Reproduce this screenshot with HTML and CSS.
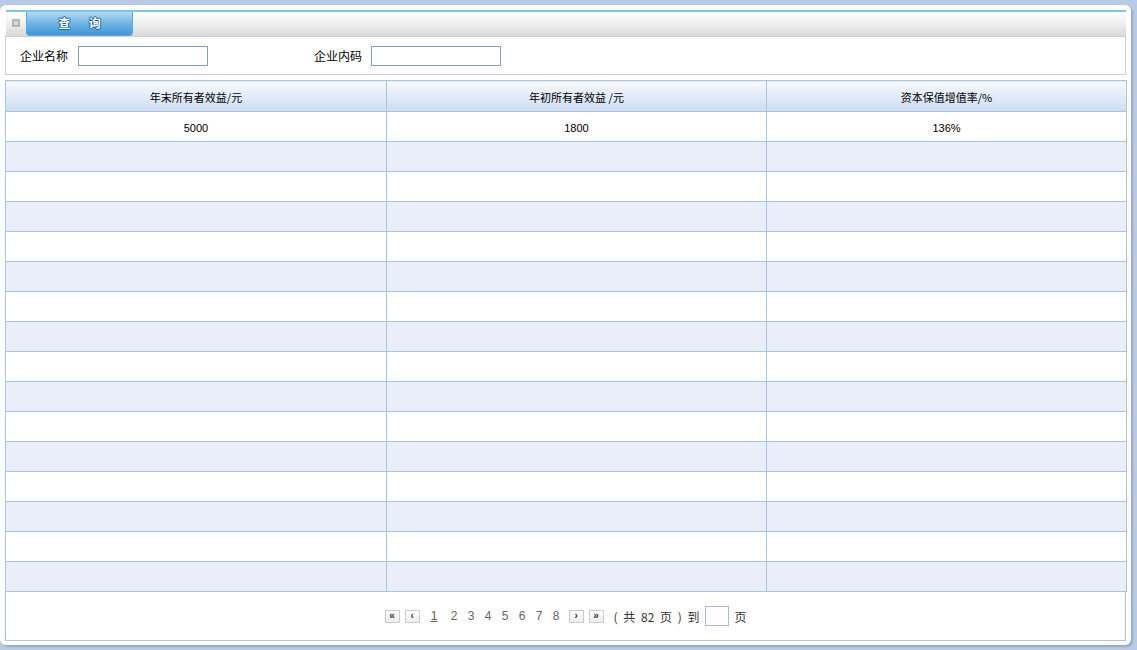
FILE: index.html
```html
<!DOCTYPE html>
<html lang="zh">
<head>
<meta charset="utf-8">
<title>查询</title>
<link rel="stylesheet" href="styles.css">
</head>
<body>
<div class="panel">
  <div class="titlebar">
    <span class="ico"><span></span></span>
    <div class="tab">查 询</div>
  </div>
  <div class="search">
    <label class="lbl">企业名称</label><input class="inp" type="text">
    <label class="lbl lbl2">企业内码</label><input class="inp" type="text">
  </div>
  <div class="grid">
    <table class="tbl">
      <colgroup><col class="c1"><col class="c2"><col class="c3"></colgroup>
      <thead>
        <tr><th>年末所有者效益/元</th><th>年初所有者效益 /元</th><th>资本保值增值率/%</th></tr>
      </thead>
      <tbody>
        <tr><td>5000</td><td>1800</td><td>136%</td></tr>
        <tr class="alt"><td></td><td></td><td></td></tr>
        <tr><td></td><td></td><td></td></tr>
        <tr class="alt"><td></td><td></td><td></td></tr>
        <tr><td></td><td></td><td></td></tr>
        <tr class="alt"><td></td><td></td><td></td></tr>
        <tr><td></td><td></td><td></td></tr>
        <tr class="alt"><td></td><td></td><td></td></tr>
        <tr><td></td><td></td><td></td></tr>
        <tr class="alt"><td></td><td></td><td></td></tr>
        <tr><td></td><td></td><td></td></tr>
        <tr class="alt"><td></td><td></td><td></td></tr>
        <tr><td></td><td></td><td></td></tr>
        <tr class="alt"><td></td><td></td><td></td></tr>
        <tr><td></td><td></td><td></td></tr>
        <tr class="alt"><td></td><td></td><td></td></tr>
      </tbody>
    </table>
    <div class="pager">
      <span class="btn">&laquo;</span>
      <span class="btn">&lsaquo;</span>
      <span class="pg cur">1</span>
      <span class="pg">2</span>
      <span class="pg">3</span>
      <span class="pg">4</span>
      <span class="pg">5</span>
      <span class="pg">6</span>
      <span class="pg">7</span>
      <span class="pg">8</span>
      <span class="btn">&rsaquo;</span>
      <span class="btn">&raquo;</span>
      <span class="info">( 共 82 页 ) 到</span>
      <input class="goto" type="text">
      <span class="info">页</span>
    </div>
  </div>
</div>
</body>
</html>
```

FILE: styles.css
```css
html, body {
  margin: 0;
  padding: 0;
}
body {
  background: #b9cbe4;
  width: 1137px;
  height: 650px;
  overflow: hidden;
  font-family: "Liberation Sans", "Noto Sans CJK SC", sans-serif;
  font-size: 12px;
  color: #000;
}
.panel {
  margin: 5px 0 0 0;
  width: 1131px;
  height: 640px;
  box-sizing: border-box;
  padding: 5px 5px 5px 5px;
  background: #fff;
  border-radius: 6px;
  box-shadow: 2px 2px 2px rgba(90, 110, 140, 0.35);
}
.titlebar {
  height: 24px;
  border-top: 2px solid #7fc6e6;
  margin-left: 1px;
  background: linear-gradient(#ffffff 0%, #f0f0f0 45%, #d9d9d9 100%);
  display: flex;
  align-items: flex-start;
}
.ico {
  width: 8px;
  height: 8px;
  margin: 7px 0 0 6px;
  background: #b4b4b4;
  display: flex;
  align-items: center;
  justify-content: center;
}
.ico span {
  width: 4px;
  height: 4px;
  background: #d8d8d8;
}
.tab {
  margin-left: 6px;
  width: 107px;
  height: 24px;
  box-sizing: border-box;
  border: 1px solid #5aa9dc;
  border-top: none;
  border-radius: 0 0 4px 4px;
  background: linear-gradient(#b4dcf5 0%, #74b9e7 45%, #3f96d6 100%);
  color: #fff;
  font-family: "Noto Sans CJK SC", sans-serif;
  font-weight: bold;
  font-size: 12px;
  letter-spacing: 8px;
  text-indent: 8px;
  text-align: center;
  line-height: 22px;
  text-shadow: 1px 0 0 #1a5fa5, -1px 0 0 #1a5fa5, 0 1px 0 #1a5fa5, 0 -1px 0 #1a5fa5;
}
.search {
  height: 39px;
  box-sizing: border-box;
  border: 1px solid #cfcfcf;
  display: flex;
  align-items: center;
  padding-left: 14px;
}
.lbl {
  font-family: "Noto Sans CJK SC", sans-serif;
  font-size: 12px;
  margin-right: 10px;
}
.lbl2 {
  margin-left: 106px;
  margin-right: 9px;
}
.inp {
  width: 130px;
  height: 20px;
  box-sizing: border-box;
  border: 1px solid #7f9fc9;
  padding: 0;
  margin: 0;
}
.grid {
  margin-top: 5px;
}
.tbl {
  width: 100%;
  border-collapse: collapse;
  table-layout: fixed;
}
.c1 { width: 381px; }
.c2 { width: 380px; }
.c3 { width: 360px; }
.tbl th, .tbl td {
  border: 1px solid #a9c5df;
  height: 29px;
  padding: 2px 0 0 0;
  box-sizing: border-box;
  text-align: center;
  font-size: 11px;
  font-weight: normal;
  font-family: "Liberation Sans", "Noto Sans CJK SC", sans-serif;
}
.tbl td {
  height: 30px;
}
.tbl th {
  height: 31px;
  padding-top: 2px;
  background: linear-gradient(#f6f9fe 0%, #e4ecf8 45%, #cfdcf1 100%);
  font-family: "Noto Sans CJK SC", sans-serif;
}
.tbl tr.alt td {
  background: #e9eef8;
}
.pager {
  height: 49px;
  box-sizing: border-box;
  border: 1px solid #a9c5df;
  border-top: none;
  display: flex;
  align-items: center;
  justify-content: center;
  padding-left: 0;
  color: #555;
}
.btn {
  width: 15px;
  height: 13px;
  box-sizing: border-box;
  border: 1px solid #cccccc;
  background: linear-gradient(#ffffff, #ececec);
  font-size: 10px;
  line-height: 10px;
  text-align: center;
  color: #333;
  margin-right: 5px;
  font-weight: bold;
}
.pg {
  font-size: 12px;
  margin-right: 8px;
  color: #666;
  width: 9px;
  text-align: center;
}
.pg.cur {
  color: #6e5a3c;
  text-decoration: underline;
  margin-left: 5px;
  margin-right: 11px;
}
.info {
  font-family: "Noto Sans CJK SC", sans-serif;
  font-size: 12px;
  color: #333;
  margin-left: 5px;
  word-spacing: 3px;
}
.goto {
  width: 24px;
  height: 20px;
  box-sizing: border-box;
  border: 1px solid #a9bcd6;
  padding: 0;
  margin: 0 0 0 6px;
}
```
